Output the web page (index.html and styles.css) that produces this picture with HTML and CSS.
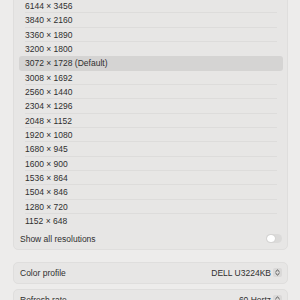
FILE: index.html
```html
<!DOCTYPE html>
<html>
<head>
<meta charset="utf-8">
<link rel="stylesheet" href="styles.css">
</head>
<body>
<div class="page">
  <section class="card res-card">
    <ul class="res-list">
      <li class="res">6144 × 3456</li>
      <li class="res">3840 × 2160</li>
      <li class="res">3360 × 1890</li>
      <li class="res before-sel">3200 × 1800</li>
      <li class="res selected">3072 × 1728 (Default)</li>
      <li class="res">3008 × 1692</li>
      <li class="res">2560 × 1440</li>
      <li class="res">2304 × 1296</li>
      <li class="res">2048 × 1152</li>
      <li class="res">1920 × 1080</li>
      <li class="res">1680 × 945</li>
      <li class="res">1600 × 900</li>
      <li class="res">1536 × 864</li>
      <li class="res">1504 × 846</li>
      <li class="res">1280 × 720</li>
      <li class="res last">1152 × 648</li>
    </ul>
    <div class="setting-row show-all">
      <span>Show all resolutions</span>
      <span class="toggle"><span class="knob"></span></span>
    </div>
  </section>

  <section class="card">
    <div class="setting-row">
      <span>Color profile</span>
      <span class="popup">DELL U3224KB
        <span class="stepper"><svg viewBox="0 0 9 9" width="9" height="9"><path d="M2.8 3.6 L4.5 2 L6.2 3.6 M2.8 5.4 L4.5 7 L6.2 5.4" fill="none" stroke="#4a4a4a" stroke-width="1" stroke-linecap="round" stroke-linejoin="round"/></svg></span>
      </span>
    </div>
  </section>

  <section class="card small-gap">
    <div class="setting-row">
      <span>Refresh rate</span>
      <span class="popup">60 Hertz
        <span class="stepper"><svg viewBox="0 0 9 9" width="9" height="9"><path d="M2.8 3.6 L4.5 2 L6.2 3.6 M2.8 5.4 L4.5 7 L6.2 5.4" fill="none" stroke="#4a4a4a" stroke-width="1" stroke-linecap="round" stroke-linejoin="round"/></svg></span>
      </span>
    </div>
  </section>
</div>
</body>
</html>
```

FILE: styles.css
```css
html, body {
  margin: 0;
  padding: 0;
  background: #edeceb;
  width: 300px;
  height: 300px;
  overflow: hidden;
}

.page {
  margin-top: -8px;
  padding: 0 12px 0 13px;
  font-family: "Liberation Sans", Arial, sans-serif;
  font-size: 8.5px;
  color: #2f2f2f;
}

.card {
  background: #e7e6e5;
  border: 1px solid #dfdedd;
  border-radius: 5px;
  margin-top: 12px;
}

.res-card {
  margin-top: 0;
  padding-top: 6px;
}

.small-gap {
  margin-top: 5px;
}

.res-list {
  list-style: none;
  margin: 0;
  padding: 0 4px 0 5px;
}

.res {
  height: 14.33px;
  line-height: 13.33px;
  padding: 1px 6px 0;
  box-sizing: border-box;
  position: relative;
  border-radius: 3px;
}

.res::after {
  content: "";
  position: absolute;
  left: 6px;
  right: 6px;
  bottom: 0;
  height: 1px;
  background: #dddcdb;
}

.res.last::after,
.res.before-sel::after,
.res.selected::after {
  display: none;
}

.res.selected {
  background: #d5d4d3;
}

.setting-row {
  display: flex;
  align-items: center;
  justify-content: space-between;
  height: 20px;
  padding: 0 5px 0 6px;
}

.show-all {
  height: 20.5px;
}

.toggle {
  width: 16px;
  height: 9px;
  border-radius: 5px;
  background: #dbdad9;
  display: flex;
  align-items: center;
  padding: 0 1px;
  box-sizing: border-box;
}

.knob {
  width: 7.5px;
  height: 7.5px;
  border-radius: 50%;
  background: #ffffff;
  box-shadow: 0 0 1px rgba(0,0,0,0.25);
}

.popup {
  display: flex;
  align-items: center;
  gap: 2px;
}

.stepper {
  width: 9px;
  height: 9px;
  border-radius: 2px;
  background: #dad9d8;
  display: flex;
}
```
